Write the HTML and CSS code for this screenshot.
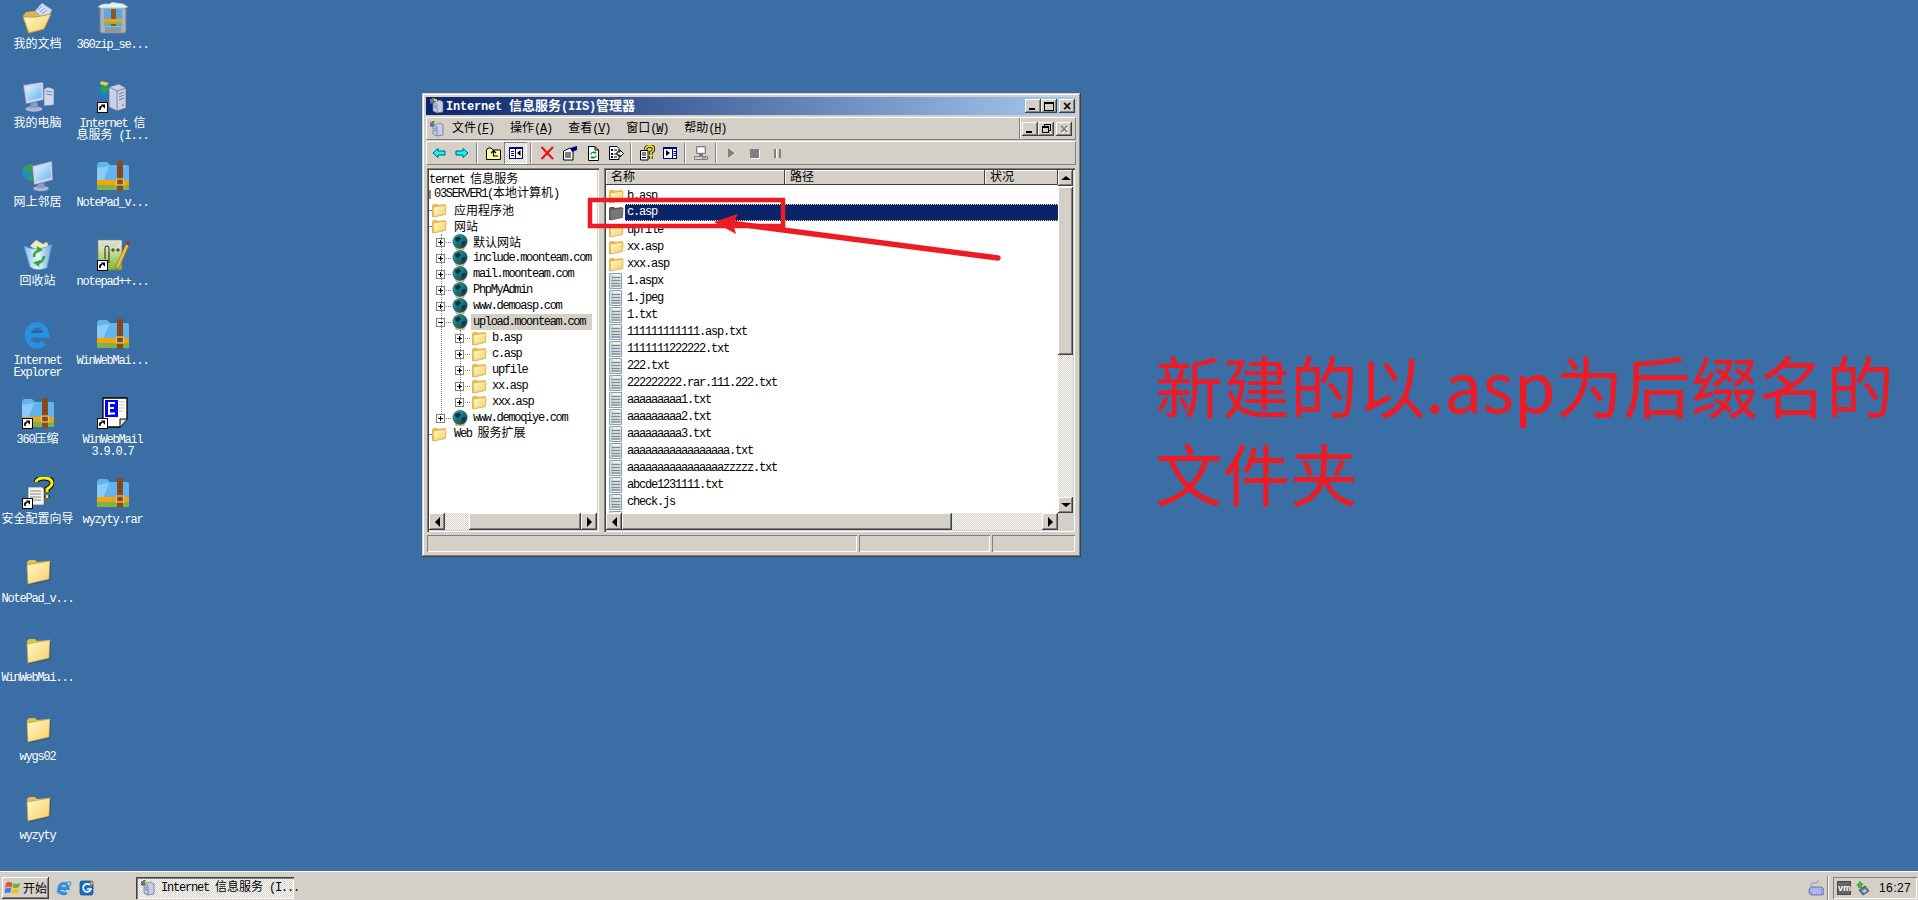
FILE: index.html
```html
<!DOCTYPE html>
<html lang="zh">
<head>
<meta charset="utf-8">
<title>Desktop</title>
<link rel="stylesheet" href="styles.css">
</head>
<body>
<svg class="defs" width="0" height="0" aria-hidden="true">
  <defs>
    <linearGradient id="gFolder" x1="0" y1="0" x2="1" y2="1"><stop offset="0" stop-color="#fffbd0"/><stop offset="1" stop-color="#f6cd62"/></linearGradient>
    <linearGradient id="gSky" x1="0" y1="0" x2="1" y2="1"><stop offset="0" stop-color="#e6f5ff"/><stop offset="1" stop-color="#5fb2f5"/></linearGradient>
    <linearGradient id="gGlobe" x1="0" y1="0" x2="1" y2="1"><stop offset="0" stop-color="#2aa8a8"/><stop offset="1" stop-color="#0a3a50"/></linearGradient>
    <linearGradient id="gBin" x1="0" y1="0" x2="1" y2="0"><stop offset="0" stop-color="#7fc0f0"/><stop offset=".5" stop-color="#e8f4fc"/><stop offset="1" stop-color="#6fa8e0"/></linearGradient>
    <linearGradient id="gGreen" x1="0" y1="0" x2="0" y2="1"><stop offset="0" stop-color="#f4f8e8"/><stop offset="1" stop-color="#7fb52f"/></linearGradient>

    <symbol id="fold16" viewBox="0 0 16 16"><path d="M1 4 L2 2 H6 L7 3 L14 2 V12 L3 15 H1 Z" fill="#e8b94e"/><path d="M2 5 L15 3 L14.5 12.5 L2.5 15 Z" fill="url(#gFolder)" stroke="#dcaa48" stroke-width=".8"/></symbol>
    <symbol id="fold16g" viewBox="0 0 16 16"><path d="M1 4 L2 2 H6 L7 3 L14 2 V12 L3 15 H1 Z" fill="#555"/><path d="M2 5 L15 3 L14.5 12.5 L2.5 15 Z" fill="#777" stroke="#5c5c5c" stroke-width=".8"/></symbol>
    <symbol id="doc16" viewBox="0 0 16 16"><path d="M1.5 .5 H13.5 V15.5 H1.5 Z" fill="#f4f1e4" stroke="#7f9db0"/><path d="M1.5 .5 H5 V15.5 H1.5 Z" fill="#b9cfd8" opacity=".6"/><path d="M3.500 4.500 H12.500 M3.500 7.500 H12.500 M3.500 10.500 H12.500 M3.500 13 H12.500" stroke="#7090a4" stroke-width="1.300"/></symbol>
    <symbol id="globe16" viewBox="0 0 16 16"><circle cx="8" cy="7.5" r="7.5" fill="url(#gGlobe)"/><path d="M3 4 L7 2.5 L9 5 L6 8 L3.5 7 Z M10 8 L13.5 7 L12.5 11 L10 12 Z" fill="#16303c"/><path d="M2.500 13 Q8 16.500 13.500 13 L12 15.800 H4 Z" fill="#e0a040"/></symbol>
    <symbol id="exp" viewBox="0 0 16 9"><path d="M10 4.5 H16" stroke="#808080" stroke-dasharray="1 1"/><rect x=".5" y=".5" width="8" height="8" fill="#fff" stroke="#808080"/><path d="M2 4.5 H7 M4.5 2 V7" stroke="#000"/></symbol>
    <symbol id="col" viewBox="0 0 16 9"><path d="M10 4.5 H16" stroke="#808080" stroke-dasharray="1 1"/><rect x=".5" y=".5" width="8" height="8" fill="#fff" stroke="#808080"/><path d="M2 4.5 H7" stroke="#000"/></symbol>
    <symbol id="mmc" viewBox="0 0 16 16"><path d="M4 4 L11 2 L14 4 V14 L8 15 L4 13 Z" fill="#c8cde6" stroke="#5f6590" stroke-width=".7"/><path d="M4 4 L8 6 V15" fill="none" stroke="#5f6590" stroke-width=".7"/><path d="M5 7 L7 8 M5 9 L7 10" stroke="#7078a0"/><rect x="1" y="1" width="3" height="3" fill="#d04f8f"/><rect x="3" y="0" width="3" height="3" fill="#2fa05a"/><rect x="5" y="1" width="3" height="2" fill="#e8d040"/><rect x="1" y="3.5" width="4" height="2" fill="#3070c0"/></symbol>

    <symbol id="t-back" viewBox="0 0 16 16"><path d="M2 8 L7 3.5 V6 H14 V10 H7 V12.5 Z" fill="#00ffff" stroke="#00605f"/></symbol>
    <symbol id="t-fwd" viewBox="0 0 16 16"><path d="M14 8 L9 3.5 V6 H2 V10 H9 V12.5 Z" fill="#00ffff" stroke="#00605f"/></symbol>
    <symbol id="t-up" viewBox="0 0 16 16"><path d="M1.5 5 V14.5 H15.5 V5 H8 L6 3 H3 Z" fill="#ffff99" stroke="#000"/><path d="M6 8 L8.5 5.5 L11 8 M8.5 6 V11 H13" fill="none" stroke="#000" stroke-width="1.2"/></symbol>
    <symbol id="t-show" viewBox="0 0 16 16"><rect x="1.5" y="2.5" width="13" height="11" fill="#fff" stroke="#000080"/><path d="M1.500 3 H14.500" stroke="#000080" stroke-width="2"/><path d="M7.500 2 V14" stroke="#000080"/><path d="M3 6.500 H6 M3 8.500 H6 M3 10.500 H6" stroke="#000080"/><path d="M12.500 5 L9 8 L12.500 11 Z" fill="#000"/></symbol>
    <symbol id="t-x" viewBox="0 0 16 16"><path d="M2.5 2 L14 14 M14 2 L2.5 14" stroke="#f01010" stroke-width="2.2"/></symbol>
    <symbol id="t-prop" viewBox="0 0 16 16"><path d="M1.5 6 L8 3 L11 6 V15 H1.5 Z" fill="#fff" stroke="#000"/><path d="M3 8 H9 M3 10 H9 M3 12 H9" stroke="#000"/><path d="M8 3 L15 1 V5 L10 7 Z" fill="#000080"/></symbol>
    <symbol id="t-refresh" viewBox="0 0 16 16"><path d="M3.5 1.5 H10 L13.5 5 V15.5 H3.5 Z" fill="#fff" stroke="#000"/><path d="M10 1.5 V5 H13.5" fill="none" stroke="#000"/><path d="M6 9.5 A2.7 2.7 0 0 1 10.5 8 M11 10.5 A2.7 2.7 0 0 1 6.5 12" fill="none" stroke="#00902a" stroke-width="1.4"/><path d="M10 6 L11.8 8.5 L9 8.5 Z M7 14 L5.2 11.5 L8 11.5 Z" fill="#00902a"/></symbol>
    <symbol id="t-export" viewBox="0 0 16 16"><path d="M1.5 1.5 H9 L11 3.5 V14.5 H1.5 Z" fill="#fff" stroke="#000"/><rect x="3" y="4" width="2" height="2" fill="#000080"/><rect x="3" y="8" width="2" height="2" fill="#000080"/><rect x="3" y="11" width="2" height="2" fill="#000080"/><path d="M6 5 H9 M6 9 H9 M6 12 H9" stroke="#000"/><path d="M9 7 H12 V5 L15.5 8.5 L12 12 V10 H9 Z" fill="#fff" stroke="#000"/></symbol>
    <symbol id="t-help" viewBox="0 0 16 16"><path d="M1.5 5.5 H9 V15 H1.5 Z" fill="#fff" stroke="#000"/><path d="M3 8 H7 M3 10 H7 M3 12.5 H7" stroke="#000"/><path d="M6.5 4.5 Q7 1 10.5 1 Q14.5 1 14.5 4.2 Q14.5 6 12 7.5 V9.5 M11.9 11 V14" fill="none" stroke="#000" stroke-width="3.4"/><path d="M6.5 4.5 Q7 1 10.5 1 Q14.5 1 14.5 4.2 Q14.5 6 12 7.5 V9.5 M11.9 11 V14" fill="none" stroke="#ffe000" stroke-width="1.8"/></symbol>
    <symbol id="t-action" viewBox="0 0 16 16"><rect x="1.5" y="2.5" width="13" height="11" fill="#fff" stroke="#000080"/><path d="M1.500 3 H14.500" stroke="#000080" stroke-width="2"/><path d="M10.500 2 V14" stroke="#000080"/><path d="M11.500 6.500 H14 M11.500 8.500 H14 M11.500 10.500 H14" stroke="#000080"/><path d="M4 5 L8 8 L4 11 Z" fill="#000"/></symbol>
    <symbol id="t-pc" viewBox="0 0 16 16"><path d="M3.5 1.5 H12.5 V8.5 H3.5 Z" fill="none" stroke="#808080"/><path d="M5 3 H11 V7.5 H5 Z" fill="#fff"/><path d="M6 9 H10 V11 H6 Z" fill="#808080"/><path d="M1.5 11.5 H14.5 V14.5 H1.5 Z" fill="none" stroke="#808080"/><path d="M9 13 H13" stroke="#808080"/></symbol>

    <symbol id="sc" viewBox="0 0 32 32"><rect x=".5" y="21.5" width="10" height="10" fill="#fff" stroke="#000"/><path d="M3 29 V26.5 L5 25" fill="none" stroke="#000" stroke-width="1.7"/><path d="M3.8 23.5 H8 V27.7 Z" fill="#000"/></symbol>
    <symbol id="d-mydocs" viewBox="0 0 32 32"><path d="M1 14 L4 10 L13 9 L23 13 L20 26 L6 31 Z" fill="#e1b349"/><path d="M13 9 L20 1 L30 8 L24 19 Z" fill="#cfe1f7" stroke="#7f9fcf" stroke-width=".7"/><path d="M16 8 L20 4 M18 10 L23 6 M20 12 L25 8" stroke="#7fa5d8"/><path d="M1 15 L14 15 L29 12 L22 27 L7 31 Z" fill="url(#gFolder)" stroke="#c59a35"/></symbol>
    <symbol id="d-zip360" viewBox="0 0 32 32"><rect x="3" y="5" width="26" height="26" rx="2" fill="#a8b4bd" stroke="#75838d"/><rect x="7" y="7" width="18" height="17" fill="#5aa8e8"/><rect x="14" y="7" width="5" height="17" fill="#8b5a1f"/><rect x="7" y="17" width="18" height="3" fill="#f0a020"/><rect x="7" y="20" width="18" height="2" fill="#8cba40"/><rect x="8" y="25" width="16" height="5" fill="#8d99a2"/><path d="M1 5 Q5 1 12 2 Q15 -1 20 1 Q27 1 31 5 L28 6 H4 Z" fill="#e6f1f6" stroke="#8fb0c0" stroke-width=".6"/></symbol>
    <symbol id="d-pc" viewBox="0 0 32 32"><ellipse cx="12" cy="28" rx="9" ry="3" fill="#aab6d8" stroke="#5b6795" stroke-width=".6"/><path d="M9 20 H15 L16 27 H8 Z" fill="#8c99c4"/><path d="M1 4 L20 1 L21.5 2 L22 19 L4 23 Z" fill="#c9d4ec" stroke="#5b6795" stroke-width=".7"/><path d="M4 6 L19 3.5 L19.5 16.5 L6 19.5 Z" fill="url(#gSky)"/><path d="M22 8 L26 6 L32 8 V24 L22 25 Z" fill="#cfd7ea" stroke="#5b6795" stroke-width=".6"/><path d="M24 10 L30 11 M24 13 L30 14" stroke="#7b86a8"/></symbol>
    <symbol id="d-iis" viewBox="0 0 32 32"><circle cx="8" cy="10" r="7" fill="#1c7fb8"/><path d="M3 7 L9 3 L12 8 L7 13 Z" fill="#35a04a"/><path d="M4 0 L12 2 L9 5 L3 3 Z" fill="#e8d040"/><path d="M12 6 L22 3 L29 7 V27 L20 30 L12 26 Z" fill="#c9cfe6" stroke="#5f6590" stroke-width=".7"/><path d="M12 6 L20 10 V30" fill="none" stroke="#5f6590" stroke-width=".7"/><path d="M20 10 L29 7" stroke="#5f6590" stroke-width=".7"/><path d="M22 13 L27 11 M22 16 L27 14 M22 19 L27 17" stroke="#7078a0"/><rect x="25" y="23" width="2" height="2" fill="#7bc02f"/></symbol>
    <symbol id="d-net" viewBox="0 0 32 32"><circle cx="8" cy="12" r="8" fill="#2487d0"/><path d="M2 8 L8 4 L13 6 L11 12 L5 14 Z" fill="#35a04a"/><path d="M5 18 L11 16 L13 20 L8 21 Z" fill="#35a04a"/><ellipse cx="19" cy="28.500" rx="8" ry="3" fill="#aab6d8" stroke="#5b6795" stroke-width=".6"/><path d="M16 22 H22 L23 28 H15 Z" fill="#8c99c4"/><path d="M10 6 L30 1 L31 20 L12 25 Z" fill="#c9d4ec" stroke="#5b6795" stroke-width=".7"/><path d="M13 8 L28 4 L29 17.500 L14.500 21.500 Z" fill="url(#gSky)"/></symbol>
    <symbol id="d-zip" viewBox="0 0 32 32"><path d="M0 6 Q0 2 3 2 H10 L13 5 H30 Q32 5 32 7 V24 H0 Z" fill="#62b4ee"/><path d="M0 8 L12 6 L6 22 H0 Z" fill="#8accf6"/><rect y="20" width="32" height="5" fill="#f5a40c"/><rect y="25" width="32" height="5" fill="#7fb34a"/><rect x="20" y="1" width="6" height="30" rx="1" fill="#8a4a1c"/><path d="M23 4 V16" stroke="#4e2a10" stroke-dasharray="1 2"/><rect x="19.500" y="19" width="7" height="6" fill="none" stroke="#e0c070" stroke-width="1.300"/></symbol>
    <symbol id="d-npp" viewBox="0 0 32 32"><rect x="1" y="1" width="24" height="30" fill="url(#gGreen)" stroke="#777" stroke-width=".8"/><path d="M3 3 H23 M3 5 H23 M3 7 H20" stroke="#c0c0c0" stroke-width=".8"/><path d="M8 20 V9 Q8 7 10 7 Q12 7 12 9 V24" fill="none" stroke="#222"/><path d="M14 11 H18 M16 9 V13 M19 11 H23 M21 9 V13" stroke="#333"/><path d="M19 27 L29 5 L32 6.500 L22 28.500 L18.500 30 Z" fill="#f0c040" stroke="#806010" stroke-width=".6"/><path d="M29 5 L30 2 L32 3 L32 6.500 Z" fill="#c02020"/></symbol>
    <symbol id="d-bin" viewBox="0 0 32 32"><path d="M8 7 L14 1 L21 5 L25 3 L27 8 L16 12 Z" fill="#f0e8c0" stroke="#b0a880" stroke-width=".5"/><path d="M2 7 Q16 14 30 5 L25 29 Q14 33 8 28 Z" fill="url(#gBin)" stroke="#5f90c8" stroke-width=".7"/><path d="M18 11 A7 7 0 0 0 12 18 M14 24 A7 7 0 0 0 22 17" fill="none" stroke="#2cae3a" stroke-width="2.600"/><path d="M15 7 L21 11 L15 14 Z M17 28 L11 23.500 L18 21 Z" fill="#2cae3a"/></symbol>
    <symbol id="d-ie" viewBox="0 0 32 32"><ellipse cx="16" cy="15" rx="17" ry="6" transform="rotate(-38 16 15)" fill="none" stroke="#2a78bc" stroke-width="1.600"/><path d="M7 17 H24.500 A9.500 10.500 0 1 0 21.500 25" fill="none" stroke="#2a8fe0" stroke-width="5.500"/><path d="M9 14 H21" stroke="#14589c" stroke-width="1"/></symbol>
    <symbol id="d-mail" viewBox="0 0 32 32"><path d="M6 1 H30 V22 L23 30 H6 Z" fill="#fff" stroke="#000" stroke-width="1.300"/><rect x="8" y="3" width="13" height="17" fill="#0000f0"/><path d="M11 6 H18 M11 11 H17 M11 16.500 H18 M12 5 V18" stroke="#fff" stroke-width="2"/><path d="M22 5 H28 M22 8 H27 M22 11 H28 M22 14 H26" stroke="#c0c0c0"/><path d="M23 30 V22 H30" fill="#ddd" stroke="#000"/></symbol>
    <symbol id="d-wizard" viewBox="0 0 32 32"><path d="M6 10 H20 L22 12 V28 H6 Z" fill="#f4f4f4" stroke="#666" stroke-width=".7"/><path d="M8 14 H19 M8 17 H19 M8 20 H19 M8 23 H19" stroke="#888"/><path d="M14 5 Q15 1 22 1 Q30 1 30 6 Q30 9 25 12 V15 M25 18 V21" fill="none" stroke="#000" stroke-width="5"/><path d="M14 5 Q15 1 22 1 Q30 1 30 6 Q30 9 25 12 V15 M25 18 V21" fill="none" stroke="#ffef00" stroke-width="3"/></symbol>
    <symbol id="d-folder" viewBox="0 0 32 32"><path d="M5 6 L7 4 L13 4 L15 6 L27 5 L26 23 L6 28 Z" fill="#e8bc4a"/><path d="M5 9 L28 5 L27 23 L6 28 Z" fill="url(#gFolder)" stroke="#caa23a" stroke-width=".8"/><path d="M7 28.500 L28 24 L28.500 6" fill="none" stroke="#1f3f66" stroke-width="1" opacity=".55"/></symbol>

    <symbol id="s-logo" viewBox="0 0 16 16"><path d="M1 3 Q4 1 7.500 3 L6.500 7.500 Q3.500 6 0 8 Z" fill="#e5532d"/><path d="M8.500 3 Q12 5 15 2.500 L14 7 Q11 9 7.500 7.500 Z" fill="#6fb13d"/><path d="M0 9 Q3.500 7 6.300 8.500 L5.300 13 Q3 11.500 -1 14 Z" fill="#3f7fd8"/><path d="M7.300 8.700 Q10.500 10 14 8 L13 13 Q10 14.500 6.300 13 Z" fill="#f4c21a"/></symbol>
    <symbol id="s-ql" viewBox="0 0 16 16"><rect x="1" y="1" width="13" height="14" rx="2" fill="#1f6fc8" stroke="#0d3f80" stroke-width=".7"/><path d="M11 5 A4 4 0 1 0 12 9 H8" fill="none" stroke="#fff" stroke-width="1.600"/><path d="M11 1 L15 3 L12 6 Z" fill="#f0a030"/></symbol>
    <symbol id="s-kbd" viewBox="0 0 16 16"><path d="M1 9 L3 7 H14 L16 10 V14 L14 15 H3 L1 13 Z" fill="#98a4e4" stroke="#5a64a8" stroke-width=".7"/><path d="M3.500 9 H13.500 M3.500 11 H13.500 M5 13 H12" stroke="#eef" stroke-dasharray="1 1"/><path d="M3 7 Q2 3 5 3 H8 Q11 3 10 0" fill="none" stroke="#8a9bb0"/></symbol>
    <symbol id="s-net" viewBox="0 0 16 16"><path d="M1 6 L5 1 L9 5 L7 5 V8 H3 V6 Z" fill="#3cb43c"/><path d="M4 10 L10 6 L14 11 L8 15 Z" fill="#5f7f90" stroke="#223" stroke-width=".6"/><path d="M7 11 L10 9 L12 11 L9 13 Z" fill="#b8d0e0"/></symbol>
  </defs>
</svg>

<div class="desktop">
  <div class="icons">
    <div class="dicon"><svg class="d32"><use href="#d-mydocs"/></svg><div class="dlabel"><span class="z">我的文档</span></div></div>
    <div class="dicon"><svg class="d32"><use href="#d-pc"/></svg><div class="dlabel"><span class="z">我的电脑</span></div></div>
    <div class="dicon"><svg class="d32"><use href="#d-net"/></svg><div class="dlabel"><span class="z">网上邻居</span></div></div>
    <div class="dicon"><svg class="d32"><use href="#d-bin"/></svg><div class="dlabel"><span class="z">回收站</span></div></div>
    <div class="dicon"><svg class="d32"><use href="#d-ie"/></svg><div class="dlabel">Internet<br>Explorer</div></div>
    <div class="dicon"><svg class="d32"><use href="#d-zip"/><use href="#sc"/></svg><div class="dlabel">360<span class="z">压缩</span></div></div>
    <div class="dicon"><svg class="d32"><use href="#d-wizard"/><use href="#sc"/></svg><div class="dlabel"><span class="z">安全配置向导</span></div></div>
    <div class="dicon"><svg class="d32"><use href="#d-folder"/></svg><div class="dlabel">NotePad_v...</div></div>
    <div class="dicon"><svg class="d32"><use href="#d-folder"/></svg><div class="dlabel">WinWebMai...</div></div>
    <div class="dicon"><svg class="d32"><use href="#d-folder"/></svg><div class="dlabel">wygs02</div></div>
    <div class="dicon"><svg class="d32"><use href="#d-folder"/></svg><div class="dlabel">wyzyty</div></div>

    <div class="dicon"><svg class="d32"><use href="#d-zip360"/></svg><div class="dlabel">360zip_se...</div></div>
    <div class="dicon"><svg class="d32"><use href="#d-iis"/><use href="#sc"/></svg><div class="dlabel">Internet <span class="z">信</span><br><span class="z">息服务</span> (I...</div></div>
    <div class="dicon"><svg class="d32"><use href="#d-zip"/></svg><div class="dlabel">NotePad_v...</div></div>
    <div class="dicon"><svg class="d32"><use href="#d-npp"/><use href="#sc"/></svg><div class="dlabel">notepad++...</div></div>
    <div class="dicon"><svg class="d32"><use href="#d-zip"/></svg><div class="dlabel">WinWebMai...</div></div>
    <div class="dicon"><svg class="d32"><use href="#d-mail"/><use href="#sc"/></svg><div class="dlabel">WinWebMail<br>3.9.0.7</div></div>
    <div class="dicon"><svg class="d32"><use href="#d-zip"/></svg><div class="dlabel">wyzyty.rar</div></div>
  </div>

  <section class="window">
    <header class="titlebar">
      <svg class="i16"><use href="#mmc"/></svg>
      <div class="title-text">Internet <span class="z">信息服务</span>(IIS)<span class="z">管理器</span></div>
      <div class="win-btns">
        <div class="wbtn"><i class="g-min"></i></div>
        <div class="wbtn"><i class="g-max"></i></div>
        <div class="wbtn wbtn-close"><i class="g-x">×</i></div>
      </div>
    </header>

    <nav class="menubar">
      <svg class="i16"><use href="#mmc"/></svg>
      <div class="menus">
        <span class="menu"><span class="z">文件</span>(<u>F</u>)</span>
        <span class="menu"><span class="z">操作</span>(<u>A</u>)</span>
        <span class="menu"><span class="z">查看</span>(<u>V</u>)</span>
        <span class="menu"><span class="z">窗口</span>(<u>W</u>)</span>
        <span class="menu"><span class="z">帮助</span>(<u>H</u>)</span>
      </div>
      <div class="mdi">
        <div class="wbtn"><i class="g-min"></i></div>
        <div class="wbtn"><i class="g-restore"></i></div>
        <div class="wbtn wbtn-off"><i class="g-x">×</i></div>
      </div>
    </nav>

    <div class="toolbar">
      <div class="tool"><svg class="i16"><use href="#t-back"/></svg></div>
      <div class="tool"><svg class="i16"><use href="#t-fwd"/></svg></div>
      <div class="tsep"></div>
      <div class="tool"><svg class="i16"><use href="#t-up"/></svg></div>
      <div class="tool tool-on"><svg class="i16"><use href="#t-show"/></svg></div>
      <div class="tsep"></div>
      <div class="tool"><svg class="i16"><use href="#t-x"/></svg></div>
      <div class="tool"><svg class="i16"><use href="#t-prop"/></svg></div>
      <div class="tool"><svg class="i16"><use href="#t-refresh"/></svg></div>
      <div class="tool"><svg class="i16"><use href="#t-export"/></svg></div>
      <div class="tsep"></div>
      <div class="tool"><svg class="i16"><use href="#t-help"/></svg></div>
      <div class="tool"><svg class="i16"><use href="#t-action"/></svg></div>
      <div class="tsep"></div>
      <div class="tool"><svg class="i16"><use href="#t-pc"/></svg></div>
      <div class="tsep"></div>
      <div class="tool"><i class="g-play"></i></div>
      <div class="tool"><i class="g-stop"></i></div>
      <div class="tool"><i class="g-pause"></i></div>
    </div>

    <div class="panes">
      <aside class="pane tree-pane">
        <div class="tree">
          <i class="tline tline-a"></i>
          <i class="tline tline-b"></i>
          <div class="trow l0">ternet <span class="z">信息服务</span></div>
          <div class="trow l0b"><i class="stub"></i><span>03SERVER1(<span class="z">本地计算机</span>)</span></div>
          <div class="trow l1"><svg class="i16"><use href="#fold16"/></svg><span class="z">应用程序池</span></div>
          <div class="trow l1"><svg class="i16"><use href="#fold16"/></svg><span class="z">网站</span></div>
          <div class="trow l2"><svg class="e16"><use href="#exp"/></svg><svg class="i16"><use href="#globe16"/></svg><span class="z">默认网站</span></div>
          <div class="trow l2"><svg class="e16"><use href="#exp"/></svg><svg class="i16"><use href="#globe16"/></svg><span>include.moonteam.com</span></div>
          <div class="trow l2"><svg class="e16"><use href="#exp"/></svg><svg class="i16"><use href="#globe16"/></svg><span>mail.moonteam.com</span></div>
          <div class="trow l2"><svg class="e16"><use href="#exp"/></svg><svg class="i16"><use href="#globe16"/></svg><span>PhpMyAdmin</span></div>
          <div class="trow l2"><svg class="e16"><use href="#exp"/></svg><svg class="i16"><use href="#globe16"/></svg><span>www.demoasp.com</span></div>
          <div class="trow l2"><svg class="e16"><use href="#col"/></svg><svg class="i16"><use href="#globe16"/></svg><span class="tsel">upload.moonteam.com</span></div>
          <div class="trow l3"><svg class="e16"><use href="#exp"/></svg><svg class="i16"><use href="#fold16"/></svg><span>b.asp</span></div>
          <div class="trow l3"><svg class="e16"><use href="#exp"/></svg><svg class="i16"><use href="#fold16"/></svg><span>c.asp</span></div>
          <div class="trow l3"><svg class="e16"><use href="#exp"/></svg><svg class="i16"><use href="#fold16"/></svg><span>upfile</span></div>
          <div class="trow l3"><svg class="e16"><use href="#exp"/></svg><svg class="i16"><use href="#fold16"/></svg><span>xx.asp</span></div>
          <div class="trow l3"><svg class="e16"><use href="#exp"/></svg><svg class="i16"><use href="#fold16"/></svg><span>xxx.asp</span></div>
          <div class="trow l2"><svg class="e16"><use href="#exp"/></svg><svg class="i16"><use href="#globe16"/></svg><span>www.demoqiye.com</span></div>
          <div class="trow l1"><svg class="i16"><use href="#fold16"/></svg><span>Web <span class="z">服务扩展</span></span></div>
        </div>
        <div class="hscroll">
          <div class="sbtn"><i class="a-left"></i></div>
          <div class="strack strack-tree"></div>
          <div class="sthumb sthumb-tree"></div>
          <div class="sbtn"><i class="a-right"></i></div>
        </div>
      </aside>

      <main class="pane list-pane">
        <div class="list-area">
          <div class="list-head">
            <div class="hcell hcell-name"><span class="z">名称</span></div>
            <div class="hcell hcell-path"><span class="z">路径</span></div>
            <div class="hcell hcell-state"><span class="z">状况</span></div>
          </div>
          <div class="rows">
            <div class="row"><svg class="i16"><use href="#fold16"/></svg><span>b.asp</span></div>
            <div class="row row-sel"><svg class="i16"><use href="#fold16g"/></svg><span>c.asp</span></div>
            <div class="row"><svg class="i16"><use href="#fold16"/></svg><span>upfile</span></div>
            <div class="row"><svg class="i16"><use href="#fold16"/></svg><span>xx.asp</span></div>
            <div class="row"><svg class="i16"><use href="#fold16"/></svg><span>xxx.asp</span></div>
            <div class="row"><svg class="i16"><use href="#doc16"/></svg><span>1.aspx</span></div>
            <div class="row"><svg class="i16"><use href="#doc16"/></svg><span>1.jpeg</span></div>
            <div class="row"><svg class="i16"><use href="#doc16"/></svg><span>1.txt</span></div>
            <div class="row"><svg class="i16"><use href="#doc16"/></svg><span>111111111111.asp.txt</span></div>
            <div class="row"><svg class="i16"><use href="#doc16"/></svg><span>1111111222222.txt</span></div>
            <div class="row"><svg class="i16"><use href="#doc16"/></svg><span>222.txt</span></div>
            <div class="row"><svg class="i16"><use href="#doc16"/></svg><span>222222222.rar.111.222.txt</span></div>
            <div class="row"><svg class="i16"><use href="#doc16"/></svg><span>aaaaaaaaa1.txt</span></div>
            <div class="row"><svg class="i16"><use href="#doc16"/></svg><span>aaaaaaaaa2.txt</span></div>
            <div class="row"><svg class="i16"><use href="#doc16"/></svg><span>aaaaaaaaa3.txt</span></div>
            <div class="row"><svg class="i16"><use href="#doc16"/></svg><span>aaaaaaaaaaaaaaaaa.txt</span></div>
            <div class="row"><svg class="i16"><use href="#doc16"/></svg><span>aaaaaaaaaaaaaaaazzzzz.txt</span></div>
            <div class="row"><svg class="i16"><use href="#doc16"/></svg><span>abcde1231111.txt</span></div>
            <div class="row"><svg class="i16"><use href="#doc16"/></svg><span>check.js</span></div>
            <div class="row"><svg class="i16"><use href="#doc16"/></svg><span>index.asp</span></div>
          </div>
        </div>
        <div class="vscroll">
          <div class="sbtn"><i class="a-up"></i></div>
          <div class="sthumb sthumb-v"></div>
          <div class="strack strack-v"></div>
          <div class="sbtn"><i class="a-down"></i></div>
        </div>
        <div class="hscroll hscroll-list">
          <div class="sbtn"><i class="a-left"></i></div>
          <div class="sthumb sthumb-h"></div>
          <div class="strack strack-h"></div>
          <div class="sbtn"><i class="a-right"></i></div>
        </div>
        <div class="corner"></div>
      </main>
    </div>

    <footer class="statusbar">
      <div class="scell scell-a"></div>
      <div class="scell scell-b"></div>
      <div class="scell scell-c"></div>
    </footer>
  </section>

  <svg class="annot" viewBox="0 0 1918 900" width="1918" height="900">
    <rect x="590" y="200" width="193" height="26" fill="none" stroke="#ed1c24" stroke-width="4.500"/>
    <path d="M998 258 L730 223" fill="none" stroke="#ed1c24" stroke-width="5.500" stroke-linecap="round"/>
    <path d="M714 222 L738 214 L733 223 L736 234 Z" fill="#ed1c24"/>
  </svg>
  <div class="note"><span>新建的以.asp为后缀名的</span><br><span>文件夹</span></div>

  <footer class="taskbar">
    <div class="start"><svg class="i16"><use href="#s-logo"/></svg><span class="z">开始</span></div>
    <div class="ql"><svg class="i16"><use href="#d-ie"/></svg><svg class="i16"><use href="#s-ql"/></svg></div>
    <div class="task"><svg class="i16"><use href="#mmc"/></svg><span>Internet <span class="z">信息服务</span> (I...</span></div>
    <div class="tray-left"><svg class="i16"><use href="#s-kbd"/></svg><i class="tray-div"></i></div>
    <div class="tray">
      <div class="vm">vm</div>
      <svg class="i16"><use href="#s-net"/></svg>
      <span class="clock">16:27</span>
    </div>
  </footer>
</div>
</body>
</html>
```
FILE: styles.css
```css
* { box-sizing: border-box; }
html, body { margin: 0; padding: 0; height: 100%; overflow: hidden; }
body {
  font: 12px/12px "Liberation Mono", "Noto Sans CJK SC", monospace;
  letter-spacing: -1.2px;
  color: #000;
}
i { font-style: normal; display: block; }
svg { display: block; flex: none; }
.defs { position: absolute; }
.z { letter-spacing: 0; font-family: "Noto Sans CJK SC", sans-serif; line-height: 8px; }
.i16 { width: 16px; height: 16px; }
.e16 { width: 16px; height: 9px; }
.d32 { width: 32px; height: 32px; }

/* desktop */
.desktop {
  position: relative;
  width: 1918px;
  height: 900px;
  background: #3a6ea5;
  display: flex;
  flex-direction: column;
}
.icons {
  flex: 1;
  display: grid;
  grid-template-rows: repeat(11, 79.1px);
  grid-auto-flow: column;
  grid-auto-columns: 75px;
  justify-content: start;
  padding-top: 1px;
  color: #fff;
}
.dicon { display: flex; flex-direction: column; align-items: center; padding-top: 1px; }
.dlabel { margin-top: 5px; text-align: center; white-space: nowrap; line-height: 12px; }

/* window */
.window {
  position: absolute;
  left: 422px;
  top: 93px;
  width: 659px;
  height: 464px;
  padding: 4px 5px 5px 4px;
  background: #d4d0c8;
  box-shadow: inset -1px -1px #404040, inset 1px 1px #d4d0c8, inset -2px -2px #808080, inset 2px 2px #fff;
  display: flex;
  flex-direction: column;
}
.titlebar {
  height: 18px;
  display: flex;
  align-items: center;
  padding: 0 1px 0 3px;
  background: linear-gradient(90deg, #0a246a, #a6caf0);
  color: #fff;
}
.title-text { margin: 1px 0 0 1px; font-weight: bold; letter-spacing: -.2px; white-space: nowrap; }
.title-text .z { font-size: 13px; letter-spacing: 0; }
.win-btns { margin-left: auto; display: flex; }
.wbtn {
  width: 16px;
  height: 14px;
  background: #d4d0c8;
  box-shadow: inset -1px -1px #404040, inset 1px 1px #fff, inset -2px -2px #808080;
  display: flex;
  align-items: center;
  justify-content: center;
  position: relative;
}
.wbtn-close { margin-left: 2px; }
.g-min { width: 6px; height: 2px; background: #000; margin-top: 6px; margin-right: 2px; }
.g-max { width: 10px; height: 9px; border: 1px solid #000; border-top-width: 2px; }
.g-restore { width: 7px; height: 7px; margin: 2px 2px 0 0; border: 1px solid #000; border-top-width: 2px; background: #d4d0c8; box-shadow: 2px -2px 0 -1px #d4d0c8, 2px -2px 0 0 #000; }
.g-x { font: bold 14px/12px "Liberation Sans", sans-serif; letter-spacing: 0; color: #000; }
.wbtn-off .g-x { color: #808080; text-shadow: 1px 1px #fff; }

.menubar {
  height: 23px;
  margin-top: 2px;
  display: flex;
  align-items: center;
  padding: 0 3px 0 2px;
  border-top: 1px solid #fff;
  border-left: 1px solid #fff;
  border-bottom: 1px solid #808080;
  border-right: 1px solid #808080;
}
.menus { display: flex; gap: 16px; margin-left: 7px; flex: 1; }
.menu { white-space: nowrap; }
.mdi { display: flex; align-self: stretch; align-items: center; padding-left: 2px; border-left: 1px solid #808080; box-shadow: inset 1px 0 #fff; }
.mdi .wbtn-off { margin-left: 2px; }

.toolbar {
  height: 24px;
  margin-top: 1px;
  display: flex;
  align-items: center;
  border-top: 1px solid #fff;
  border-left: 1px solid #fff;
  border-bottom: 1px solid #808080;
  border-right: 1px solid #808080;
}
.tool { width: 23px; height: 22px; display: flex; align-items: center; justify-content: center; }
.tool-on {
  background: repeating-conic-gradient(#fff 0 25%, #d4d0c8 0 50%) 0 0 / 2px 2px;
  box-shadow: inset 1px 1px #808080, inset -1px -1px #fff;
}
.tsep { width: 8px; height: 20px; position: relative; }
.tsep::before { content: ""; position: absolute; left: 3px; top: 0; bottom: 0; width: 1px; background: #808080; box-shadow: 1px 0 #fff; }
.g-play { width: 0; height: 0; border-left: 7px solid #808080; border-top: 5px solid transparent; border-bottom: 5px solid transparent; filter: drop-shadow(1px 0 #fff); }
.g-stop { width: 9px; height: 9px; background: #808080; box-shadow: 1px 1px #fff; }
.g-pause { width: 7px; height: 9px; border-left: 2px solid #808080; border-right: 2px solid #808080; box-shadow: inset 1px 0 #fff; }

/* panes */
.panes { flex: 1; min-height: 0; margin: 3px 1px 0; display: flex; gap: 5px; }
.pane {
  background: #fff;
  box-shadow: inset 1px 1px #808080, inset 2px 2px #404040, inset -1px -1px #fff, inset -2px -2px #d4d0c8;
  padding: 2px;
  min-width: 0;
}
.tree-pane { width: 172px; display: flex; flex-direction: column; }
.tree { position: relative; flex: 1; overflow: hidden; white-space: nowrap; letter-spacing: -1.3px; }
.trow { height: 16px; display: flex; align-items: center; }
.trow > .z { line-height: 16px; }
.l0 { display: block; line-height: 16px; }
.stub { width: 3px; height: 9px; background: #8a8a8a; margin-right: 3px; margin-left: -1px; }
.l1 { padding-left: 2px; gap: 7px; position: relative; }
.l1::before { content: ""; position: absolute; left: 0; top: 8px; width: 2px; border-top: 1px dotted #808080; }
.l2 { padding-left: 7px; }
.l2 > span { margin-left: 5px; }
.l3 { padding-left: 26px; }
.l3 > span { margin-left: 5px; }
.l2 > .tsel { background: #d4d0c8; height: 16px; line-height: 16px; padding-left: 2px; width: 121px; margin-left: 3px; }
.tline { position: absolute; z-index: 0; border-left: 1px dotted #808080; }
.tline-a { left: 12px; top: 64px; height: 180px; }
.tline-b { left: 31px; top: 160px; height: 74px; }

.hscroll { height: 17px; display: flex; flex: none; }
.sbtn {
  width: 16px;
  height: 16px;
  flex: none;
  background: #d4d0c8;
  box-shadow: inset -1px -1px #404040, inset 1px 1px #fff, inset -2px -2px #808080;
  display: flex;
  align-items: center;
  justify-content: center;
}
.hscroll .sbtn { height: 17px; }
.strack { background: repeating-conic-gradient(#fff 0 25%, #d4d0c8 0 50%) 0 0 / 2px 2px; }
.sthumb { background: #d4d0c8; box-shadow: inset -1px -1px #404040, inset 1px 1px #fff, inset -2px -2px #808080; }
.strack-tree { width: 24px; }
.sthumb-tree { flex: 1; }
.a-left { border-right: 5px solid #000; border-top: 5px solid transparent; border-bottom: 5px solid transparent; }
.a-right { border-left: 5px solid #000; border-top: 5px solid transparent; border-bottom: 5px solid transparent; }
.a-up { border-bottom: 4px solid #000; border-left: 5px solid transparent; border-right: 5px solid transparent; }
.a-down { border-top: 4px solid #000; border-left: 5px solid transparent; border-right: 5px solid transparent; }

.list-pane {
  width: 471px;
  display: grid;
  grid-template-columns: 1fr 15px;
  grid-template-rows: 1fr 17px;
}
.list-area { min-height: 0; min-width: 0; display: flex; flex-direction: column; }
.list-head { height: 15px; display: flex; flex: none; }
.hcell {
  background: #d4d0c8;
  box-shadow: inset -1px -1px #404040, inset 1px 1px #fff;
  padding: 2px 0 0 5px;
  line-height: 12px;
}
.hcell-name { width: 179px; }
.hcell-path { width: 200px; }
.hcell-state { flex: 1; }
.rows { flex: 1; min-height: 0; overflow: hidden; padding-top: 2px; }
.row { height: 17px; display: flex; align-items: center; padding-left: 2px; white-space: nowrap; }
.row span { margin-left: 3px; }
.row-sel span {
  flex: 1;
  height: 17px;
  line-height: 15px;
  margin-left: 1px;
  padding-left: 2px;
  background: #0a246a;
  color: #fff;
  border-top: 1px dotted #f0d890;
  border-bottom: 1px dotted #f0d890;
}
.vscroll { display: flex; flex-direction: column; }
.vscroll .sbtn { width: 15px; }
.sthumb-v { height: 168px; margin-top: 1px; }
.strack-v { flex: 1; }
.hscroll-list { min-width: 0; }
.hscroll-list .sbtn { width: 16px; }
.sthumb-h { width: 330px; }
.strack-h { flex: 1; }
.corner { background: #d4d0c8; }

.statusbar { height: 17px; margin: 3px 1px 0; display: flex; gap: 2px; }
.scell { box-shadow: inset 1px 1px #808080, inset -1px -1px #fff; }
.scell-a { width: 430px; }
.scell-b { width: 131px; }
.scell-c { flex: 1; }

/* annotation */
.annot { position: absolute; left: 0; top: 0; pointer-events: none; }
.note {
  position: absolute;
  left: 1155px;
  top: 340px;
  font: 67.6px/88px "Noto Sans CJK SC", sans-serif;
  letter-spacing: 0;
  color: #ed1c24;
  white-space: nowrap;
}

/* taskbar */
.taskbar {
  height: 30px;
  flex: none;
  background: #d4d0c8;
  border-top: 1px solid #fff;
  box-shadow: inset 0 1px #d4d0c8;
  display: flex;
  align-items: center;
  padding: 2px 1px 0 2px;
}
.start {
  width: 47px;
  height: 22px;
  display: flex;
  align-items: center;
  gap: 2px;
  padding-left: 3px;
  box-shadow: inset -1px -1px #404040, inset 1px 1px #fff, inset -2px -2px #808080;
}
.start > .z { line-height: 16px; }
.ql { margin-left: 7px; display: flex; gap: 7px; width: 80px; }
.task {
  width: 158px;
  height: 22px;
  display: flex;
  align-items: center;
  gap: 5px;
  padding-left: 4px;
  white-space: nowrap;
  background: repeating-conic-gradient(#fff 0 25%, #d4d0c8 0 50%) 0 0 / 2px 2px;
  box-shadow: inset 1px 1px #404040, inset 2px 2px #808080, inset -1px -1px #fff;
}
.tray-left { margin-left: auto; display: flex; align-items: center; gap: 3px; }
.tray-div { width: 1px; height: 24px; background: #808080; box-shadow: 1px 0 #fff; }
.tray {
  width: 84px;
  height: 22px;
  margin-left: 5px;
  display: flex;
  align-items: center;
  padding-left: 4px;
  gap: 4px;
  box-shadow: inset 1px 1px #808080, inset -1px -1px #fff;
}
.vm {
  width: 14px;
  height: 14px;
  background: #666;
  color: #fff;
  font: bold 9px/12px "Liberation Sans", sans-serif;
  letter-spacing: 0;
  text-align: center;
  border: 1px solid #444;
}
.clock { margin-left: 4px; font: 12px/14px "Liberation Sans", sans-serif; letter-spacing: .4px; }
```
